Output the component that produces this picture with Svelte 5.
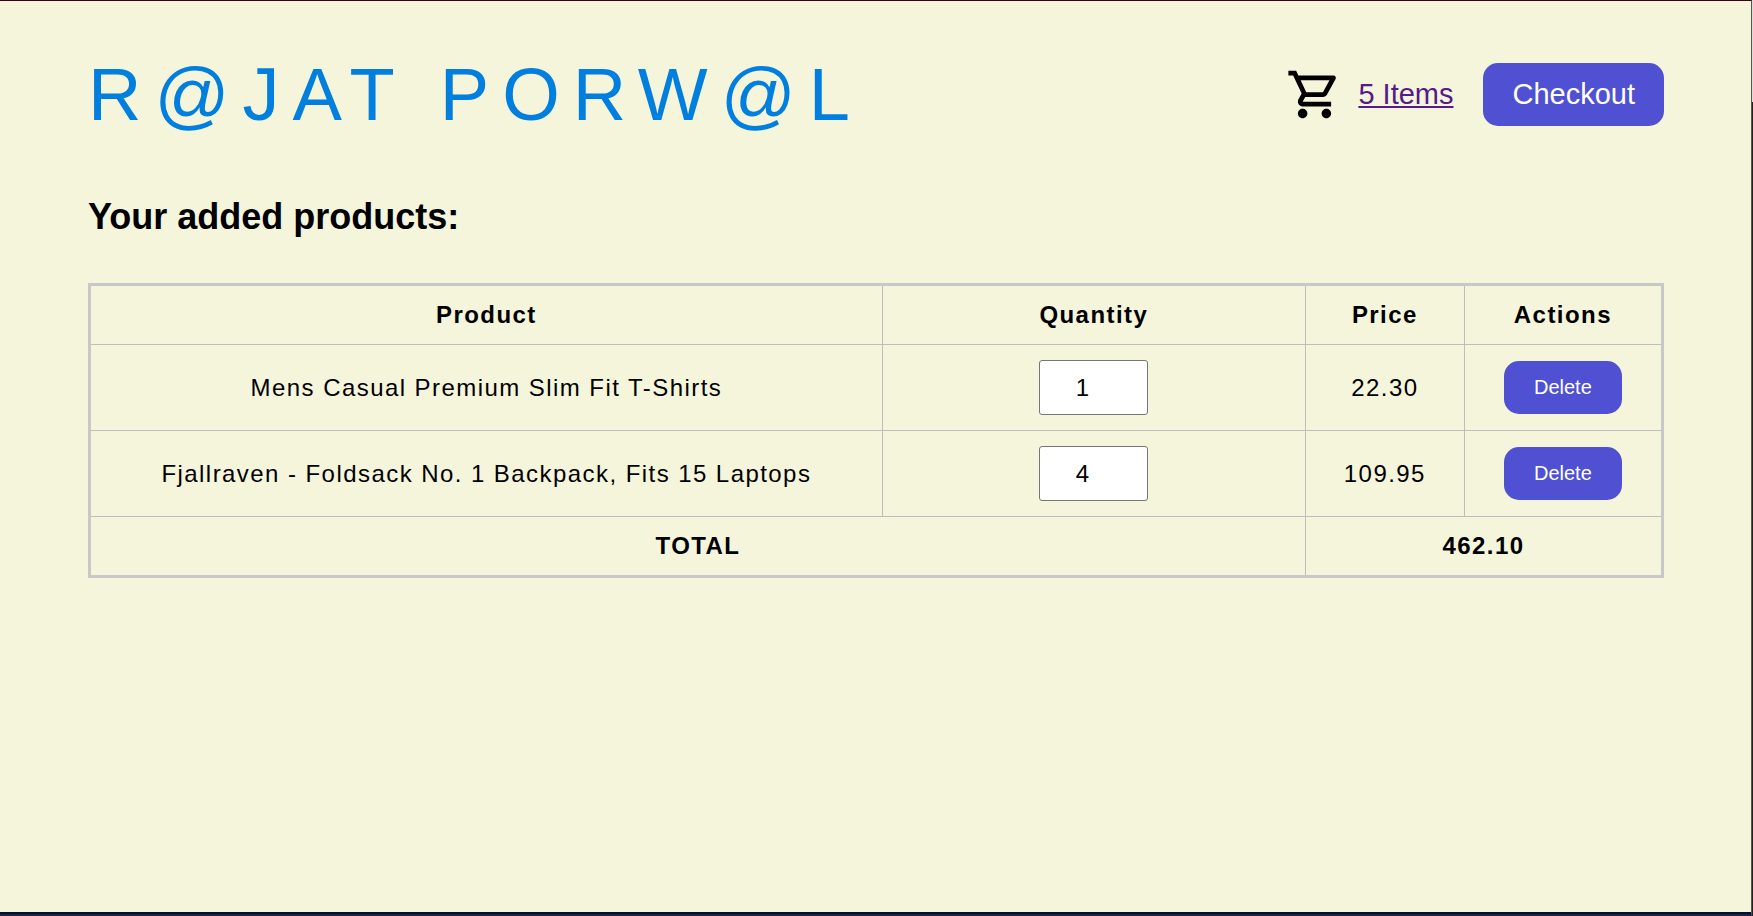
<script>
  let items = $state([
    { id: 1, title: 'Mens Casual Premium Slim Fit T-Shirts', quantity: 1, price: 22.3 },
    { id: 2, title: 'Fjallraven - Foldsack No. 1 Backpack, Fits 15 Laptops', quantity: 4, price: 109.95 }
  ]);

  let count = $derived(items.reduce((sum, item) => sum + item.quantity, 0));
  let total = $derived(items.reduce((sum, item) => sum + item.quantity * item.price, 0));

  function remove(id) {
    items = items.filter((item) => item.id !== id);
  }
</script>

<div class="window">
  <div class="page">
    <header>
      <h1>R@JAT PORW@L</h1>
      <div class="cart">
        <svg viewBox="0 0 24 24" aria-hidden="true">
          <path d="M15.55 13c.75 0 1.41-.41 1.75-1.03l3.58-6.49c.37-.66-.11-1.48-.87-1.48H5.21l-.94-2H1v2h2l3.6 7.59-1.35 2.44C4.52 15.37 5.48 17 7 17h12v-2H7l1.1-2h7.45zM6.16 6h12.15l-2.76 5H8.53L6.16 6zM7 18c-1.1 0-1.99.9-1.99 2S5.9 22 7 22s2-.9 2-2-.9-2-2-2zm10 0c-1.1 0-1.99.9-1.99 2s.89 2 1.99 2 2-.9 2-2-.9-2-2-2z" />
        </svg>
        <a href="#cart">{count} Items</a>
        <button class="checkout" type="button">Checkout</button>
      </div>
    </header>

    <main id="cart">
      <h2>Your added products:</h2>
      <table>
        <colgroup>
          <col class="product" />
          <col class="quantity" />
          <col class="price" />
          <col />
        </colgroup>
        <thead>
          <tr>
            <th scope="col">Product</th>
            <th scope="col">Quantity</th>
            <th scope="col">Price</th>
            <th scope="col">Actions</th>
          </tr>
        </thead>
        <tbody>
          {#each items as item (item.id)}
            <tr>
              <td>{item.title}</td>
              <td>
                <input type="number" min="1" aria-label="Quantity of {item.title}" bind:value={item.quantity} />
              </td>
              <td>{item.price.toFixed(2)}</td>
              <td><button type="button" onclick={() => remove(item.id)}>Delete</button></td>
            </tr>
          {/each}
        </tbody>
        <tfoot>
          <tr>
            <th colspan="2" scope="row">TOTAL</th>
            <th colspan="2">{total.toFixed(2)}</th>
          </tr>
        </tfoot>
      </table>
    </main>
  </div>
</div>

<style>
  :global(body) {
    margin: 0;
    background: linear-gradient(#dcdcdc 102px, #222 102px);
  }

  .window {
    box-sizing: border-box;
    min-height: 100vh;
    margin-right: 1px;
    border-top: 1px solid #3a0018;
    border-right: 1px solid #555;
    border-bottom: 2px solid #1a2142;
    box-shadow: inset 0 -2px #000f2c;
    background: #f5f5dc;
    color: #000;
    font-family: Arial, 'Liberation Sans', sans-serif;
  }

  .page {
    padding: 52px 87px 60px 88px;
  }

  header {
    display: flex;
    align-items: center;
    justify-content: space-between;
    margin-bottom: 60px;
  }

  h1 {
    margin: 0;
    color: #007fde;
    font-size: 74px;
    font-weight: 400;
    line-height: 83px;
    letter-spacing: 13px;
  }

  .cart {
    display: flex;
    align-items: center;
    font-size: 29px;
  }

  .cart svg {
    width: 57px;
    height: 57px;
    margin-right: 15px;
  }

  .cart a {
    margin-right: 30px;
    color: #551a8b;
  }

  button {
    padding: 15px 30px;
    border: 0;
    border-radius: 15px;
    background: #5050d2;
    color: #fff;
    font-family: inherit;
    font-size: 20px;
    line-height: 23px;
    cursor: pointer;
  }

  .checkout {
    padding: 15px 29px;
    font-size: 29px;
    line-height: 33px;
  }

  h2 {
    margin: 0 0 46px;
    font-size: 36px;
    line-height: 41px;
  }

  table {
    width: 100%;
    border: 3px solid #c8c8c8;
    border-collapse: collapse;
    table-layout: fixed;
    font-size: 24px;
    line-height: 28px;
    letter-spacing: 0.06em;
    text-align: center;
  }

  .product {
    width: 50.4%;
  }

  .quantity {
    width: 26.9%;
  }

  .price {
    width: 10.1%;
  }

  th,
  td {
    padding: 15px;
    border: 1px solid #bebebe;
  }

  input {
    display: block;
    box-sizing: border-box;
    width: 109px;
    height: 55px;
    margin: 0 auto;
    padding: 0 20px 0 12px;
    border: 1px solid #767676;
    border-radius: 3px;
    background: #fff;
    color: #000;
    font-family: inherit;
    font-size: 24px;
    text-align: center;
  }
</style>
